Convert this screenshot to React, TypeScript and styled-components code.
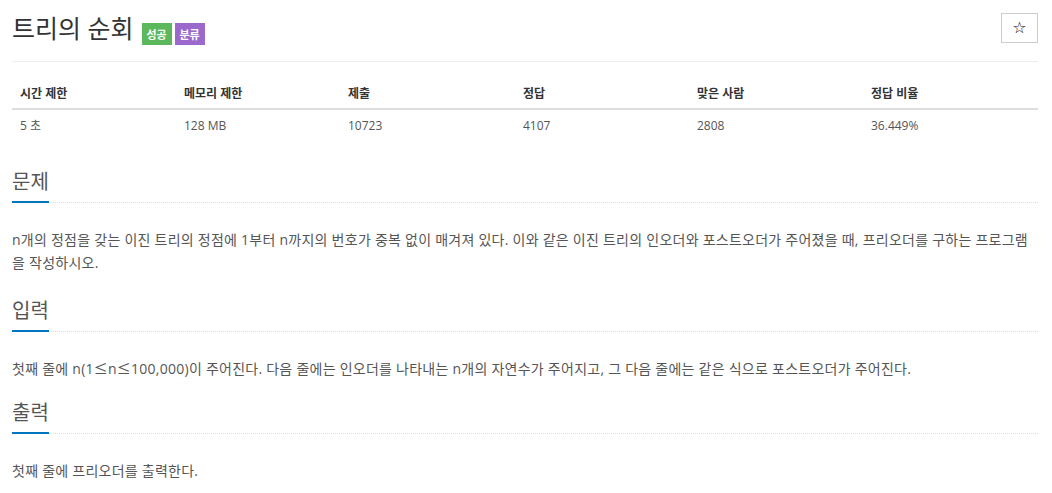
import React from 'react';
import styled, { createGlobalStyle } from 'styled-components';

const GlobalStyle = createGlobalStyle`
  body {
    margin: 0;
    background: #fff;
    font-family: "Open Sans", "Noto Sans CJK KR", sans-serif;
    color: #555;
  }
`;

const stats = [
  { label: '시간 제한', value: '5 초', width: 164 },
  { label: '메모리 제한', value: '128 MB', width: 164 },
  { label: '제출', value: '10723', width: 175 },
  { label: '정답', value: '4107', width: 174 },
  { label: '맞은 사람', value: '2808', width: 174 },
  { label: '정답 비율', value: '36.449%', width: 175 },
];

export default function App() {
  return (
    <>
      <GlobalStyle />
      <StyledPage>
        <StyledHeader>
          <StyledTitleGroup>
            <StyledTitle>트리의 순회</StyledTitle>
            <StyledLabel $color="#5cb85c">성공</StyledLabel>
            <StyledLabel $color="#9b69cc">분류</StyledLabel>
          </StyledTitleGroup>
          <StyledStarButton type="button">☆</StyledStarButton>
        </StyledHeader>

        <StyledTable>
          <colgroup>
            {stats.map((s) => (
              <col key={s.label} style={{ width: s.width }} />
            ))}
          </colgroup>
          <thead>
            <tr>
              {stats.map((s) => (
                <StyledTh key={s.label}>{s.label}</StyledTh>
              ))}
            </tr>
          </thead>
          <tbody>
            <tr>
              {stats.map((s) => (
                <StyledTd key={s.label}>{s.value}</StyledTd>
              ))}
            </tr>
          </tbody>
        </StyledTable>

        <StyledSection $gap={26}>
          <StyledHeadline>
            <StyledH2>문제</StyledH2>
          </StyledHeadline>
          <StyledText>
            n개의 정점을 갖는 이진 트리의 정점에 1부터 n까지의 번호가 중복 없이 매겨져 있다. 이와 같은 이진 트리의
            인오더와 포스트오더가 주어졌을 때, 프리오더를 구하는 프로그램을 작성하시오.
          </StyledText>
        </StyledSection>

        <StyledSection $gap={23}>
          <StyledHeadline>
            <StyledH2>입력</StyledH2>
          </StyledHeadline>
          <StyledText>
            첫째 줄에 n(1<StyledMath>≤</StyledMath>n<StyledMath>≤</StyledMath>100,000)이 주어진다. 다음 줄에는
            인오더를 나타내는 n개의 자연수가 주어지고, 그 다음 줄에는 같은 식으로 포스트오더가 주어진다.
          </StyledText>
        </StyledSection>

        <StyledSection $gap={19}>
          <StyledHeadline>
            <StyledH2>출력</StyledH2>
          </StyledHeadline>
          <StyledText>첫째 줄에 프리오더를 출력한다.</StyledText>
        </StyledSection>
      </StyledPage>
    </>
  );
}

const StyledPage = styled.div`
  padding: 13px 14px 0 12px;
`;

const StyledHeader = styled.div`
  display: flex;
  justify-content: space-between;
  align-items: flex-start;
  padding-bottom: 18px;
  border-bottom: 1px solid #eee;
`;

const StyledTitleGroup = styled.div`
  display: flex;
  align-items: flex-end;
  gap: 3px;
`;

const StyledTitle = styled.h1`
  margin: 0 5px 0 0;
  font-size: 25px;
  line-height: 30px;
  font-weight: 400;
  color: #333;
`;

const StyledLabel = styled.span<{ $color: string }>`
  display: inline-flex;
  align-items: center;
  justify-content: center;
  width: 30px;
  height: 22px;
  margin-bottom: -2px;
  background: ${(p) => p.$color};
  color: #fff;
  font-size: 11px;
  font-weight: 700;
`;

const StyledStarButton = styled.button`
  width: 37px;
  height: 30px;
  padding: 0;
  border: 1px solid #ccc;
  border-radius: 0;
  background: #fff;
  color: #111;
  font-size: 16px;
  font-family: "DejaVu Sans", sans-serif;
  line-height: 1;
`;

const StyledTable = styled.table`
  width: 100%;
  margin-top: 14px;
  border-collapse: collapse;
  table-layout: fixed;
`;

const StyledTh = styled.th`
  padding: 8px 8px 4px;
  text-align: left;
  font-size: 12px;
  line-height: 20px;
  font-weight: 700;
  color: #333;
  border-bottom: 2px solid #ddd;
`;

const StyledTd = styled.td`
  padding: 6px 8px;
  font-size: 12px;
  line-height: 20px;
  color: #555;
`;

const StyledSection = styled.section<{ $gap: number }>`
  margin-top: ${(p) => p.$gap}px;
`;

const StyledHeadline = styled.div`
  border-bottom: 1px dotted #ddd;
`;

const StyledH2 = styled.h2`
  display: inline-block;
  margin: 0 0 -1px;
  padding-bottom: 5px;
  font-size: 20px;
  line-height: 28px;
  font-weight: 400;
  color: #555;
  border-bottom: 2px solid #0076c0;
`;

const StyledText = styled.p`
  margin: 25px 0 0;
  font-size: 14px;
  line-height: 23px;
  letter-spacing: 0.25px;
  color: #555;
`;

const StyledMath = styled.span`
  font-family: "Noto Sans CJK KR", sans-serif;
`;
